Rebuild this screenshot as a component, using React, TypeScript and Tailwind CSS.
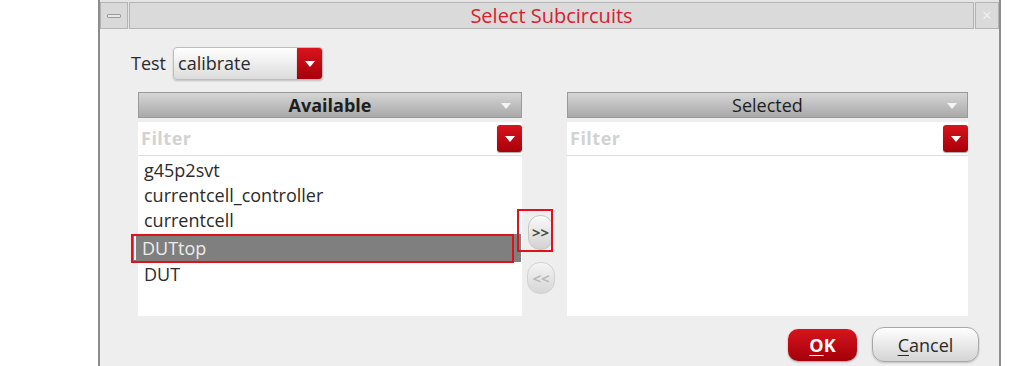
import { ReactNode } from 'react';

const font = { fontFamily: '"Open Sans", "DejaVu Sans", sans-serif' };

function Caret({ className = 'fill-white' }: { className?: string }) {
  return (
    <svg width="10" height="6" viewBox="0 0 10 6" className={className}>
      <path d="M0 0 H10 L5 6 Z" />
    </svg>
  );
}

function RedDrop({ className = '' }: { className?: string }) {
  return (
    <div
      className={`flex items-center justify-center rounded-[3px] bg-gradient-to-b from-[#d8141c] to-[#a8000a] shadow-[0_1px_1px_rgba(0,0,0,0.35)] ${className}`}
    >
      <Caret />
    </div>
  );
}

function Panel({ title, bold, width, children }: { title: string; bold?: boolean; width: string; children?: ReactNode }) {
  return (
    <div className={`flex shrink-0 flex-col ${width}`}>
      <div className="relative flex h-[26px] items-center justify-center border border-[#9a9a9a] bg-gradient-to-b from-[#d6d6d6] to-[#a9a9a9]">
        <span className={`text-[18px] leading-none text-[#1e1e1e] ${bold ? 'font-bold' : ''}`}>{title}</span>
        <div className="absolute right-[10px] top-[10px]">
          <Caret className="fill-[#f4f4f4]" />
        </div>
      </div>
      <div className="mt-[4px] flex h-[33px] items-center justify-between bg-white pl-[3px] pr-0">
        <span className="text-[18px] font-bold tracking-[0.5px] text-[#d2d2d2]">Filter</span>
        <RedDrop className="h-[27px] w-[25px]" />
      </div>
      <div className="h-[1px] bg-[#dedede]" />
      <div className="relative h-[160px] bg-white">{children}</div>
    </div>
  );
}

export default function App() {
  const items = ['g45p2svt', 'currentcell_controller', 'currentcell'];
  return (
    <div className="flex h-[366px] w-[1013px] overflow-hidden bg-white text-[#2b2b2b]" style={font}>
      <div className="w-[98px] shrink-0" />
      <div className="flex w-[903px] shrink-0 flex-col border-x-2 border-[#8c8c8c] bg-[#eeeeee]">
        {/* title bar */}
        <div className="flex h-[29px] gap-[1px] bg-[#e4e4e4] pt-[2px]">
          <div className="flex w-[28px] items-center justify-center border border-[#b4b4b4] bg-[#d9d9d9]">
            <div className="h-[4px] w-[14px] rounded-[1px] border border-[#9a9a9a] bg-[#eaeaea]" />
          </div>
          <div className="flex flex-1 items-center justify-center border border-[#b4b4b4] bg-[#dadada]">
            <span className="text-[20px] leading-none text-[#d8202e]">Select Subcircuits</span>
          </div>
          <div className="flex w-[24px] items-center justify-center border border-[#b4b4b4] bg-[#dadada] text-[13px] text-[#f0f0f0]">
            ✕
          </div>
        </div>

        {/* test selector */}
        <div className="mt-[18px] flex items-center pl-[31px]">
          <span className="text-[18px] text-[#2b2b2b]">Test</span>
          <div className="ml-[7px] flex h-[33px] w-[150px] overflow-hidden rounded-[4px] border border-[#bdbdbd] bg-gradient-to-b from-[#ffffff] to-[#dcdcdc] shadow-[0_1px_2px_rgba(0,0,0,0.2)]">
            <span className="flex-1 pl-[4px] text-[18px] leading-[31px]">calibrate</span>
            <RedDrop className="h-full w-[25px] rounded-none" />
          </div>
        </div>

        {/* panels */}
        <div className="mt-[12px] flex pl-[38px]">
          <Panel title="Available" bold width="w-[384px]">
            <div className="flex flex-col pt-[1px] text-[18px] leading-none">
              {items.map((it) => (
                <div key={it} className="flex h-[25px] items-center pl-[6px]">
                  {it}
                </div>
              ))}
              <div className="mt-[2px] h-[28px]" />
              <div className="flex h-[24px] items-center pl-[6px]">DUT</div>
            </div>
            {/* highlighted row with annotation */}
            <div className="absolute left-[-6px] top-[78px] flex h-[28px] w-[389px] items-center bg-[#7f7f7f]">
              <div className="ml-[2px] h-[24px] w-[2px] bg-[#f4f4f4]" />
              <span className="pl-[6px] text-[18px] leading-none text-[#ececec]">DUTtop</span>
            </div>
            <div className="absolute left-[-7px] top-[78px] h-[29px] w-[383px] border-2 border-[#e0101c]" />
          </Panel>

          <div className="relative w-[45px] shrink-0">
            <div className="absolute left-[6px] top-[123px] flex h-[35px] w-[25px] items-center justify-center rounded-[12px] border border-[#c8c8c8] bg-gradient-to-b from-[#fafafa] to-[#d2d2d2] text-[15px] font-bold text-[#4a4a4a]">
              &gt;&gt;
            </div>
            <div className="absolute left-[-5px] top-[117px] h-[43px] w-[36px] border-2 border-[#e0101c]" />
            <div className="absolute left-[5px] top-[170px] flex h-[32px] w-[28px] items-center justify-center rounded-[13px] border border-[#d2d2d2] bg-gradient-to-b from-[#f4f4f4] to-[#d6d6d6] text-[15px] font-bold text-[#b8b8b8]">
              &lt;&lt;
            </div>
          </div>

          <Panel title="Selected" width="w-[401px]" />
        </div>

        {/* buttons */}
        <div className="mt-[11px] flex items-center justify-end gap-[15px] pr-[20px]">
          <div className="flex h-[32px] w-[69px] items-center justify-center rounded-[10px] bg-gradient-to-b from-[#d8141c] to-[#a4000a] shadow-[0_1px_2px_rgba(0,0,0,0.35)]">
            <span className="text-[18px] font-bold leading-none text-white">
              <span className="underline underline-offset-[3px]">O</span>K
            </span>
          </div>
          <div className="flex h-[35px] w-[107px] items-center justify-center rounded-[12px] border border-[#a8a8a8] bg-gradient-to-b from-[#ffffff] to-[#d4d4d4] shadow-[0_1px_2px_rgba(0,0,0,0.2)]">
            <span className="text-[18px] leading-none text-[#2b2b2b]">
              <span className="underline underline-offset-[3px]">C</span>ancel
            </span>
          </div>
        </div>
      </div>
    </div>
  );
}
